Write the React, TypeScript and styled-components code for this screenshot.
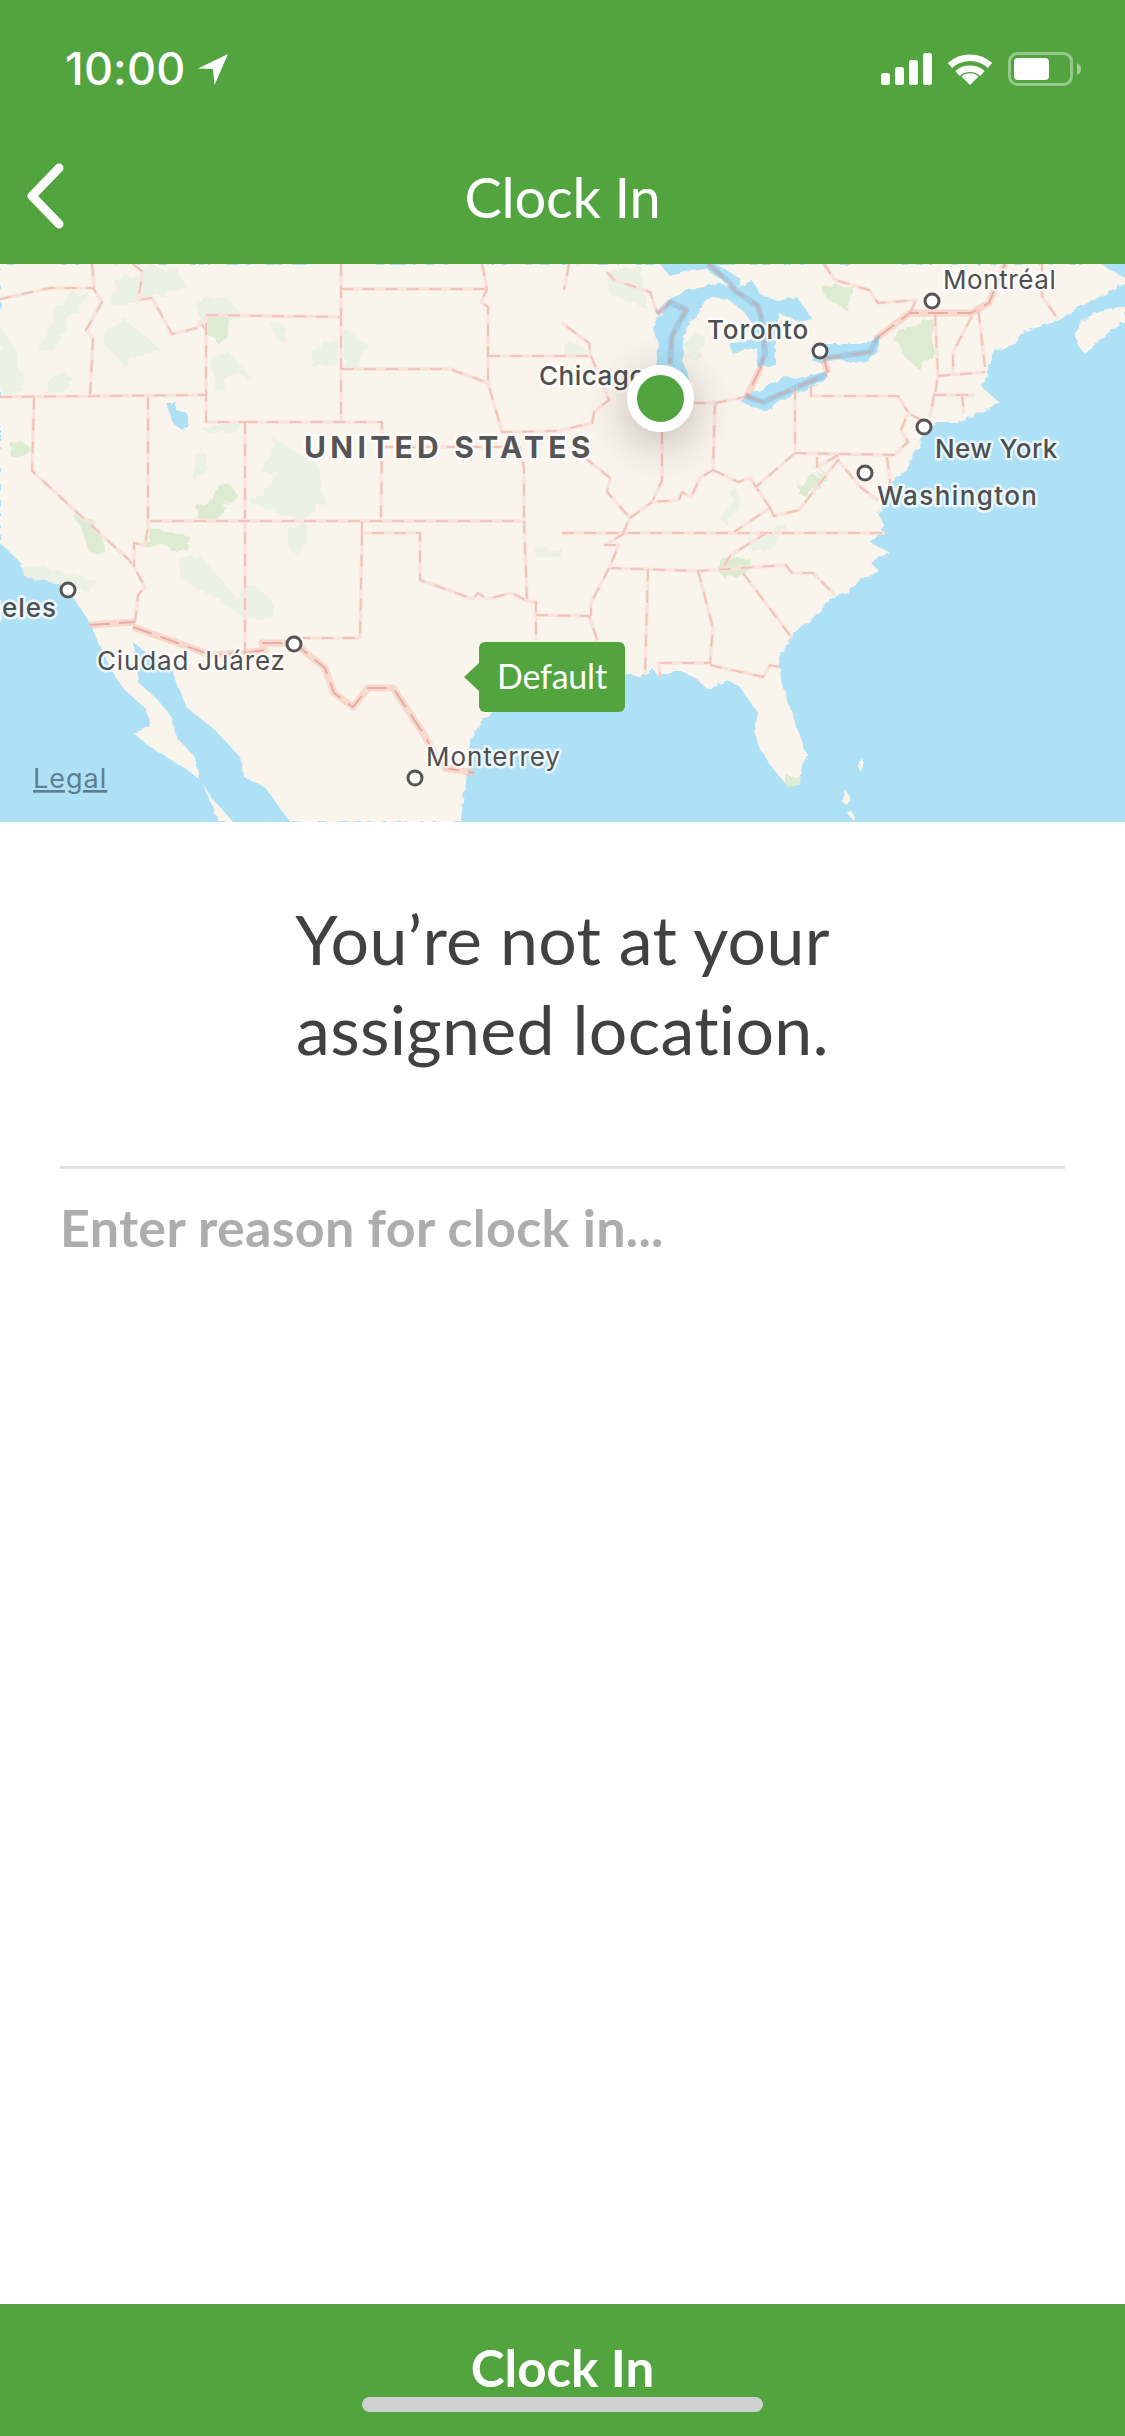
import { createGlobalStyle, styled } from 'styled-components';

const GREEN = '#52a43e';

const GlobalStyle = createGlobalStyle`
    html, body {
        margin: 0;
        padding: 0;
        background: #fff;
    }
`;

const S = {
    Page: styled.div`
        width: 1125px;
        height: 2436px;
        display: flex;
        flex-direction: column;
        background: #fff;
        overflow: hidden;
        font-family: Lato, 'Noto Sans', sans-serif;
    `,
    Header: styled.header`
        height: 264px;
        flex: none;
        background: ${GREEN};
        color: #fff;
        display: flex;
        flex-direction: column;
    `,
    StatusBar: styled.div`
        height: 134px;
        padding: 44px 44px 0 65px;
        box-sizing: border-box;
        display: flex;
        justify-content: space-between;
        align-items: flex-start;
    `,
    Time: styled.div`
        display: flex;
        align-items: center;
        gap: 12px;
        font-family: Inter, sans-serif;
        font-weight: 500;
        font-size: 45px;
        line-height: 50px;
        letter-spacing: 0.2px;
    `,
    Nav: styled.div`
        flex: 1;
        position: relative;
        display: flex;
        align-items: center;
        justify-content: center;
    `,
    Back: styled.button`
        position: absolute;
        left: 24px;
        top: 29px;
        width: 42px;
        height: 66px;
        padding: 0;
        border: 0;
        background: none;
        display: flex;
    `,
    Title: styled.h1`
        margin: -5px 0 0;
        font-size: 56px;
        line-height: 70px;
        font-weight: 400;
        letter-spacing: -0.3px;
    `,
    Map: styled.div`
        position: relative;
        height: 558px;
        flex: none;
        overflow: hidden;
        background: #aee0f6;

        svg {
            display: block;
        }
    `,
    Pin: styled.div`
        position: absolute;
        left: 627px;
        top: 101px;
        width: 47px;
        height: 47px;
        border: 10px solid #fff;
        border-radius: 50%;
        background: ${GREEN};
        box-shadow: 0 10px 44px rgba(70, 60, 40, 0.34);
    `,
    Callout: styled.div`
        position: absolute;
        left: 479px;
        top: 378px;
        width: 146px;
        height: 70px;
        border-radius: 6px;
        background: ${GREEN};
        color: #fff;
        font-size: 34px;
        line-height: 68px;
        letter-spacing: -0.2px;
        text-align: center;

        &::before {
            content: '';
            position: absolute;
            left: -15px;
            top: 21px;
            border-style: solid;
            border-width: 14px 15px 14px 0;
            border-color: transparent ${GREEN} transparent transparent;
        }
    `,
    Body: styled.main`
        flex: 1;
        padding: 72px 60px 0;
        display: flex;
        flex-direction: column;
    `,
    Message: styled.h2`
        margin: 0;
        font-size: 68px;
        line-height: 90px;
        font-weight: 400;
        color: #414141;
        text-align: center;
        letter-spacing: 0.3px;
    `,
    Reason: styled.div`
        margin-top: 92px;
        border-top: 3px solid #e3e3e3;
        padding-top: 27px;
        font-size: 52px;
        line-height: 62px;
        font-weight: 700;
        color: #adadad;
        letter-spacing: 0.3px;
    `,
    Footer: styled.button`
        position: relative;
        height: 132px;
        flex: none;
        padding: 32px 0 0;
        border: 0;
        background: ${GREEN};
        color: #fff;
        font-family: inherit;
        font-size: 51px;
        line-height: 64px;
        font-weight: 700;
        display: flex;
        justify-content: center;
        align-items: flex-start;
    `,
    HomeBar: styled.span`
        position: absolute;
        left: 362px;
        top: 93px;
        width: 401px;
        height: 15px;
        border-radius: 8px;
        background: #d0d0d0;
    `,
};

const Label = styled.text<{ $weight?: number; $size?: number; $color?: string; $halo?: string }>`
    font-family: Inter, sans-serif;
    font-size: ${({ $size }) => $size ?? 26}px;
    font-weight: ${({ $weight }) => $weight ?? 400};
    fill: ${({ $color }) => $color ?? '#4f4f4f'};
    paint-order: stroke;
    stroke: ${({ $halo }) => $halo ?? 'rgba(255, 255, 255, 0.75)'};
    stroke-width: 5px;
    stroke-linejoin: round;
`;

const LAND =
    '0,264 1100,264 1115,272 1125,278 1125,284 1117,287 1105,294 1072,311 1058,321 1025,331 1015,344 995,351 985,377 982,387 1000,403 957,423 935,423 921,440 907,470 878,493 885,500 878,513 885,527 871,543 889,552 871,563 878,570 860,580 849,592 835,595 821,610 792,637 779,657 781,680 792,713 806,753 799,785 785,783 774,770 759,747 754,730 758,713 749,700 738,685 727,681 706,688 698,680 684,672 670,672 659,677 652,668 645,675 625,675 560,690 502,710 484,717 470,740 466,783 462,822 290,822 265,787 244,777 240,757 215,730 186,707 172,670 143,650 134,643 138,682 158,700 172,717 176,737 195,757 199,777 211,797 233,822 219,822 211,803 201,780 183,767 150,747 133,733 150,727 147,710 125,690 115,677 97,640 90,623 75,600 61,583 25,577 20,562 0,543';

const ISLANDS = [
    '1075,331 1082,321 1098,311 1125,306 1125,322 1105,335 1085,354 1077,344',
    '846,790 851,800 848,806 842,802',
    '850,810 854,815 853,820 848,814',
    '862,758 864,764 860,772 858,766',
];

const LAKES = [
    '655,367 658,341 652,327 670,297 697,287 717,284 732,287 753,281 760,294 777,301 797,297 812,319 800,322 780,314 775,331 775,364 758,369 757,347 733,354 730,344 753,339 753,324 743,311 730,301 710,296 698,314 690,321 683,341 683,361 688,377 655,377',
    '660,264 670,276 690,271 707,269 715,276 735,287 742,280 716,264',
    '740,401 747,396 767,387 783,377 800,379 823,372 828,376 807,389 787,397 767,411 750,406',
    '812,361 820,344 850,344 867,344 880,334 880,347 867,361 853,362 833,359 820,362',
    '166,403 176,402 176,410 186,412 188,424 182,430 174,424',
];

const FOREST_LIGHT = [
    '107,330 122,317 158,347 122,363 107,347',
    '39,350 54,313 72,293 90,293 68,320 54,350',
    '0,327 18,353 25,393 0,393',
    '118,283 150,267 179,270 186,287 150,297 136,303 107,303',
    '197,303 226,297 244,317 200,327',
    '211,357 229,353 251,377 229,373 215,393',
    '311,350 337,337 338,363 311,365',
    '344,330 372,347 358,367 344,367',
    '268,320 286,327 286,342 277,340',
    '262,473 276,440 315,463 326,503 297,520 251,503 279,473',
    '193,477 200,447 208,460 197,483',
    '286,533 304,520 308,540 294,553',
    '200,427 243,423 229,433 208,433',
    '54,373 75,377 61,393 47,393',
    '533,550 562,547 562,557 537,557',
    '176,557 201,557 236,597 251,583 272,600 272,620 244,617 215,597 183,580',
    '22,567 43,567 100,583 86,592 54,583 25,577',
    '609,270 641,267 648,310 609,293',
    '684,343 702,333 702,357 686,360',
    '720,517 738,490 741,500 727,527',
    '759,533 788,525 774,550 749,550',
    '562,340 587,347 591,355 562,355',
];

const FOREST_DARK = [
    '207,317 229,317 227,339 208,339',
    '7,450 18,438 32,450 21,457 11,457',
    '73,513 95,520 106,553 90,552',
    '200,508 229,483 235,493 218,517 195,520',
    '149,527 190,537 186,547 143,547',
    '899,330 935,320 935,360 917,368 898,350',
    '822,287 855,287 846,310 828,300',
    '795,490 820,467 824,477 806,497',
    '716,570 731,557 752,560 749,570 727,580',
    '783,775 799,775 797,787 788,788',
];

const BORDERS = [
    '0,299 50,288 93,288 102,302 86,330 93,338 90,396',
    '92,264 94,288',
    '133,264 143,272 138,300 152,298 172,334 197,328 200,322 206,330',
    '206,315 341,317 341,422 206,422 206,315',
    '341,264 341,317',
    '341,289 487,289',
    '482,264 487,289 481,302 488,307 488,383',
    '342,369 450,369 488,383 502,432 562,431',
    '488,356 591,356 589,343 562,323',
    '245,422 382,422 381,521',
    '381,447 520,447 524,468 524,521',
    '0,397 206,395',
    '34,397 32,471 129,560 134,567 145,587 138,595 135,622',
    '148,397 148,527 145,545 134,543 134,567',
    '245,422 245,653',
    '150,521 524,521',
    '362,521 362,533 420,533 420,580 473,599 478,593 487,599 512,593 527,601 536,602 536,640',
    '362,533 360,638 303,638',
    '524,521 527,601',
    '536,615 589,616 597,639 591,651',
    '609,568 591,603 591,616',
    '609,568 698,571 786,565 792,573 813,573 835,595',
    '648,569 645,675',
    '698,571 713,628 710,663 659,663 660,677',
    '710,665 763,677 770,665 779,667',
    '743,573 792,638',
    '562,533 885,533',
    '625,533 605,545 619,545 609,568',
    '768,532 731,555 723,567',
    '569,264 564,290',
    '607,272 614,280 650,292 657,312',
    '591,356 609,400 594,412 592,423 562,430',
    '584,457 610,478 607,492 630,518 623,533',
    '662,432 662,480 652,502 630,518',
    '715,403 713,470 700,478 691,497 682,492 679,500 652,502',
    '693,403 715,403 745,397',
    '713,470 738,482 750,478 770,508 734,532',
    '770,508 774,516 799,510 817,487 838,460 860,487 878,500',
    '795,388 795,453 756,487 750,478',
    '795,453 894,455 908,442 901,430 908,413 921,420',
    '811,385 811,396 898,396 908,412',
    '817,457 817,467 838,455',
    '887,457 891,487 901,490',
    '824,264 835,280 869,290 878,303 916,300 910,313',
    '995,292 1005,264',
    '1042,264 1042,296 1058,319',
    '985,367 978,307',
    '972,316 953,352 953,376',
    '935,314 938,376 935,394',
    '938,376 985,372',
    '934,395 975,395',
    '934,395 930,417',
    '962,395 964,413',
];

const NATIONAL_BORDERS = [
    '90,625 135,622',
    '133,627 211,655 244,653 265,650 262,643 294,643 325,668 334,693 353,707 368,688 393,688 423,733 434,753 445,768 474,773',
    '878,337 910,313 971,313 989,303 1005,264',
    '828,373 824,360',
    '761,367 747,396',
];

// borders that run over the lakes read grey-blue instead of pink
const LAKE_BORDERS = [
    '657,314 670,302 686,310 672,336 670,364',
    '730,284 735,291 758,306 762,321 765,354 760,367',
    '745,396 763,402 827,374',
    '823,359 847,355 870,352 878,336',
    '708,264 722,276 730,284',
];

const CITIES: [number, number][] = [
    [932, 301],
    [820, 351],
    [924, 427],
    [865, 473],
    [68, 590],
    [294, 644],
    [415, 778],
];

const LABELS: {
    text: string;
    x: number;
    y: number;
    anchor?: string;
    weight?: number;
    spacing?: number;
}[] = [
    { text: 'Montréal', x: 943, y: 289, spacing: 0.6 },
    { text: 'Toronto', x: 707, y: 339, weight: 500, spacing: 0.9 },
    { text: 'Chicago', x: 539, y: 385, weight: 500, spacing: 0.5 },
    { text: 'New York', x: 935, y: 458, weight: 500, spacing: 0.4 },
    { text: 'Washington', x: 877, y: 505, weight: 500, spacing: 1.4 },
    { text: 'Los Angeles', x: 57, y: 617, anchor: 'end', weight: 500, spacing: 1 },
    { text: 'Ciudad Juárez', x: 97, y: 670, spacing: 0.85 },
    { text: 'Monterrey', x: 426, y: 766, spacing: 0.9 },
];

function MapDrawing() {
    return (
        <svg width="1125" height="558" viewBox="0 264 1125 558">
            <defs>
                <filter id="coast" x="-2%" y="-2%" width="104%" height="104%">
                    <feTurbulence type="fractalNoise" baseFrequency="0.12" numOctaves="2" seed="4" />
                    <feDisplacementMap in="SourceGraphic" scale="6" />
                </filter>
                <filter id="woods" x="-20%" y="-20%" width="140%" height="140%">
                    <feTurbulence type="fractalNoise" baseFrequency="0.07" numOctaves="3" seed="9" />
                    <feDisplacementMap in="SourceGraphic" scale="14" />
                </filter>
            </defs>
            <g filter="url(#coast)">
                <polygon points={LAND} fill="#f9f4ec" />
                {ISLANDS.map((points) => (
                    <polygon key={points} points={points} fill="#f9f4ec" />
                ))}
            </g>
            <g filter="url(#woods)">
                {FOREST_LIGHT.map((points) => (
                    <polygon key={points} points={points} fill="#ebf1e5" />
                ))}
                {FOREST_DARK.map((points) => (
                    <polygon key={points} points={points} fill="#ddebd3" />
                ))}
            </g>
            <g filter="url(#coast)">
                {LAKES.map((points) => (
                    <polygon key={points} points={points} fill="#aee0f6" />
                ))}
            </g>
            <g fill="none" strokeLinejoin="round">
                {BORDERS.map((points) => (
                    <g key={points}>
                        <polyline points={points} stroke="#fbe3dd" strokeWidth="3.5" />
                        <polyline
                            points={points}
                            stroke="#f2c3b8"
                            strokeWidth="2"
                            strokeDasharray="12 10"
                        />
                    </g>
                ))}
                {NATIONAL_BORDERS.map((points) => (
                    <g key={points}>
                        <polyline
                            points={points}
                            stroke="#f5c6ba"
                            strokeOpacity="0.6"
                            strokeWidth="7"
                        />
                        <polyline
                            points={points}
                            stroke="#eaaea2"
                            strokeWidth="2"
                            strokeDasharray="20 9"
                        />
                    </g>
                ))}
                {LAKE_BORDERS.map((points) => (
                    <g key={points}>
                        <polyline
                            points={points}
                            stroke="#8fa6c4"
                            strokeOpacity="0.35"
                            strokeWidth="6"
                        />
                        <polyline
                            points={points}
                            stroke="#cfa6a6"
                            strokeOpacity="0.7"
                            strokeWidth="2"
                            strokeDasharray="20 9"
                        />
                    </g>
                ))}
            </g>
            {CITIES.map(([x, y]) => (
                <circle
                    key={x}
                    cx={x}
                    cy={y}
                    r="7"
                    fill="#fff"
                    stroke="#555"
                    strokeWidth="3"
                />
            ))}
            {LABELS.map(({ text, x, y, anchor, weight, spacing }) => (
                <Label
                    key={text}
                    x={x}
                    y={y}
                    textAnchor={anchor}
                    $weight={weight}
                    letterSpacing={spacing}
                >
                    {text}
                </Label>
            ))}
            <Label x={304} y={458} $weight={700} $size={30} $color="#555" letterSpacing="4.3">
                UNITED STATES
            </Label>
            <Label
                x={33}
                y={788}
                $size={27}
                $color="#5e7f90"
                $halo="transparent"
                textDecoration="underline"
                letterSpacing="1"
            >
                Legal
            </Label>
        </svg>
    );
}

function StatusIcons() {
    return (
        <svg width="201" height="50" viewBox="880 44 201 50">
            <g fill="#fff">
                <rect x="881" y="73" width="9" height="12" rx="2.5" />
                <rect x="895" y="67" width="9" height="18" rx="2.5" />
                <rect x="909" y="60" width="9" height="25" rx="2.5" />
                <rect x="923" y="53" width="9" height="32" rx="2.5" />
            </g>
            <g fill="none" stroke="#fff" strokeWidth="6.5">
                <path d="M950 65.5a30 30 0 0 1 40 0" />
                <path d="M957.5 73.5a19 19 0 0 1 25 0" />
            </g>
            <path d="M970 85l-8.5-8.5a13 13 0 0 1 17 0z" fill="#fff" />
            <rect
                x="1009.5"
                y="53.5"
                width="62"
                height="31"
                rx="8"
                fill="none"
                stroke="#fff"
                strokeOpacity="0.4"
                strokeWidth="3"
            />
            <rect x="1014" y="58" width="35" height="22" rx="4" fill="#fff" />
            <path d="M1077 63c3 1 4 3 4 6s-1 5-4 6z" fill="#fff" fillOpacity="0.45" />
        </svg>
    );
}

export default function App() {
    return (
        <S.Page>
            <GlobalStyle />
            <S.Header>
                <S.StatusBar>
                    <S.Time>
                        10:00
                        <svg width="32" height="32" viewBox="0 0 32 32">
                            <path d="M1 15.5L31 1 17.5 32l-1.5-16z" fill="#fff" />
                        </svg>
                    </S.Time>
                    <StatusIcons />
                </S.StatusBar>
                <S.Nav>
                    <S.Back type="button" aria-label="Back">
                        <svg width="42" height="66" viewBox="0 0 42 66">
                            <path
                                d="M35 5L8 33l27 28"
                                fill="none"
                                stroke="#fff"
                                strokeWidth="9"
                                strokeLinecap="round"
                                strokeLinejoin="round"
                            />
                        </svg>
                    </S.Back>
                    <S.Title>Clock In</S.Title>
                </S.Nav>
            </S.Header>
            <S.Map>
                <MapDrawing />
                <S.Pin />
                <S.Callout>Default</S.Callout>
            </S.Map>
            <S.Body>
                <S.Message>
                    You’re not at your
                    <br />
                    assigned location.
                </S.Message>
                <S.Reason>Enter reason for clock in...</S.Reason>
            </S.Body>
            <S.Footer type="button">
                Clock In
                <S.HomeBar />
            </S.Footer>
        </S.Page>
    );
}
